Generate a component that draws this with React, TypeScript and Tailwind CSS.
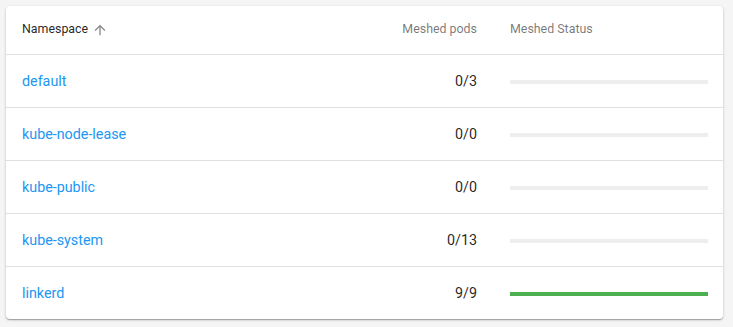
import React from "react"

const rows = [
  { name: "default", meshed: 0, total: 3 },
  { name: "kube-node-lease", meshed: 0, total: 0 },
  { name: "kube-public", meshed: 0, total: 0 },
  { name: "kube-system", meshed: 0, total: 13 },
  { name: "linkerd", meshed: 9, total: 9 },
]

export default function App() {
  return (
    <div className="w-[733px] h-[327px] bg-[#f5f5f5] p-[6px] font-['Roboto',sans-serif]">
      <div className="bg-white rounded-[4px] shadow-[0_1px_3px_rgba(0,0,0,0.2),0_1px_1px_rgba(0,0,0,0.14),0_2px_1px_-1px_rgba(0,0,0,0.12)] w-[717px]">
        <table className="w-full border-collapse">
          <thead>
            <tr className="h-[48px] border-b border-[#e0e0e0]">
              <th className="text-left font-normal text-[12.4px] text-[rgba(0,0,0,0.87)] pl-4">
                <span className="inline-flex items-center gap-[4px]">
                  Namespace
                  <svg width="16" height="16" viewBox="0 0 24 24" fill="#8a8a8a">
                    <path d="M4 12l1.41 1.41L11 7.83V20h2V7.83l5.58 5.59L20 12l-8-8-8 8z" />
                  </svg>
                </span>
              </th>
              <th className="text-right font-normal text-[12.4px] text-[rgba(0,0,0,0.54)] w-[200px] pr-[16px]">Meshed pods</th>
              <th className="text-left font-normal text-[12.4px] text-[rgba(0,0,0,0.54)] w-[230px] pl-[17px] pr-[15px]">Meshed Status</th>
            </tr>
          </thead>
          <tbody>
            {rows.map((r, i) => {
              const pct = r.total === 0 ? 0 : (r.meshed / r.total) * 100
              return (
                <tr key={r.name} className={`h-[53px] ${i < rows.length - 1 ? "border-b border-[#e0e0e0]" : ""}`}>
                  <td className="pl-4 pt-[2px] text-[14.3px] text-[#2196f3]">{r.name}</td>
                  <td className="text-right pt-[2px] pr-[16px] text-[14.3px] text-[rgba(0,0,0,0.87)]">{r.meshed}/{r.total}</td>
                  <td className="pl-[17px] pt-[2px] pr-[15px]">
                    <div className="h-[4px] bg-[#eeeeee] w-full">
                      <div className="h-full bg-[#4caf50]" style={{ width: `${pct}%` }} />
                    </div>
                  </td>
                </tr>
              )
            })}
          </tbody>
        </table>
      </div>
    </div>
  )
}
